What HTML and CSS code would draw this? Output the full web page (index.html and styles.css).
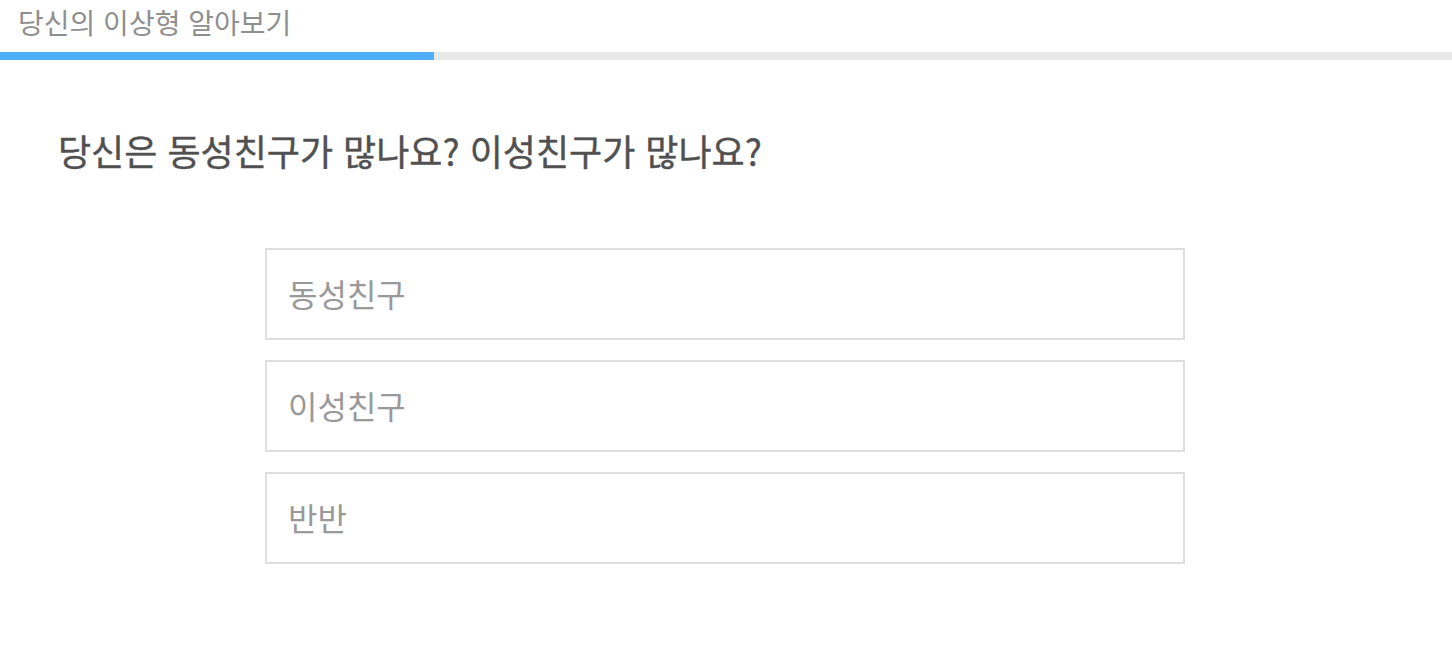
FILE: index.html
```html
<!DOCTYPE html>
<html lang="ko">
<head>
<meta charset="utf-8">
<title>당신의 이상형 알아보기</title>
<link rel="stylesheet" href="styles.css">
</head>
<body>
<header class="top">
  <h1 class="title">당신의 이상형 알아보기</h1>
  <div class="progress"><div class="progress-fill" style="width:434px"></div></div>
</header>
<main class="quiz">
  <h2 class="question">당신은 동성친구가 많나요? 이성친구가 많나요?</h2>
  <ul class="options">
    <li class="option">동성친구</li>
    <li class="option">이성친구</li>
    <li class="option">반반</li>
  </ul>
</main>
</body>
</html>
```
FILE: styles.css
```css
* { box-sizing: border-box; }
html, body { margin: 0; padding: 0; background: #fff; }
body {
  font-family: "Noto Sans CJK KR", "Noto Sans", sans-serif;
  width: 1452px;
  height: 650px;
  overflow: hidden;
}
.top { display: flex; flex-direction: column; }
.title {
  margin: 0;
  height: 52px;
  padding: 0 0 0 18px;
  font-size: 28px;
  font-weight: 400;
  line-height: 44px;
  color: #8f8f8f;
}
.progress {
  height: 8px;
  background: #e8e8e8;
}
.progress-fill { height: 100%; background: #4eadf5; }
.quiz { display: flex; flex-direction: column; }
.question {
  margin: 0;
  padding: 60px 0 0 58px;
  height: 188px;
  font-size: 36px;
  font-weight: 400;
  line-height: 60px;
  color: #505050;
  -webkit-text-stroke: 0.4px #505050;
}
.options {
  list-style: none;
  margin: 0 0 0 265px;
  padding: 0;
  width: 920px;
  display: flex;
  flex-direction: column;
  gap: 20px;
}
.option {
  height: 92px;
  border: 2px solid #dedede;
  padding: 0 0 0 21px;
  font-size: 32px;
  line-height: 86px;
  color: #999;
}
```
